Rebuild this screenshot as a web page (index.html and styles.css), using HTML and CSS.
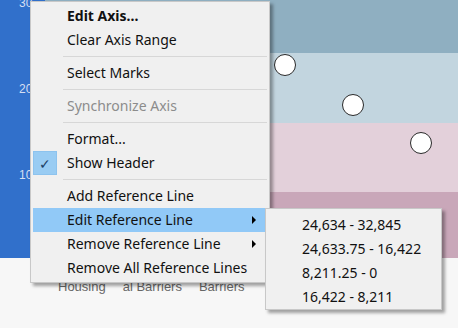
FILE: index.html
```html
<!DOCTYPE html>
<html lang="en">
<head>
  <meta charset="UTF-8" />
  <title>Axis menu</title>
  <link rel="stylesheet" href="styles.css">
</head>
<body>
<div class="view">
  <div class="chart">
    <div class="axis">
      <span class="tick">30</span>
      <span class="tick">20</span>
      <span class="tick">10</span>
    </div>
    <div class="plot">
      <div class="band band-1"></div>
      <div class="band band-2"></div>
      <div class="band band-3"></div>
      <div class="band band-4"></div>
      <div class="mark" style="left: 229px; top: 54px;"></div>
      <div class="mark" style="left: 297px; top: 94px;"></div>
      <div class="mark" style="left: 365px; top: 132px;"></div>
    </div>
  </div>
  <div class="labels">
    <span class="label">Housing</span>
    <span class="label">al Barriers</span>
    <span class="label">Barriers</span>
  </div>

  <!-- === CONTEXT MENU === -->
  <div class="menu">
    <div class="item bold">Edit Axis...</div>
    <div class="item">Clear Axis Range</div>
    <div class="sep"></div>
    <div class="item">Select Marks</div>
    <div class="sep"></div>
    <div class="item disabled">Synchronize Axis</div>
    <div class="sep"></div>
    <div class="item">Format...</div>
    <div class="item checked"><span class="check">&#10003;</span>Show Header</div>
    <div class="sep"></div>
    <div class="item">Add Reference Line</div>
    <div class="item active has-sub">Edit Reference Line</div>
    <div class="item has-sub">Remove Reference Line</div>
    <div class="item">Remove All Reference Lines</div>
  </div>

  <!-- === SUBMENU === -->
  <div class="submenu">
    <div class="sub-item">24,634 - 32,845</div>
    <div class="sub-item">24,633.75 - 16,422</div>
    <div class="sub-item">8,211.25 - 0</div>
    <div class="sub-item">16,422 - 8,211</div>
  </div>
</div>
</body>
</html>
```

FILE: styles.css
```css
* {
  box-sizing: border-box;
}

body {
  margin: 0;
  background-color: #F7F7F7;
  font-family: 'Noto Sans', sans-serif;
  width: 458px;
  height: 328px;
  overflow: hidden;
}

.view {
  position: relative;
  width: 458px;
  height: 328px;
}

/* ===== Chart ===== */
.chart {
  display: flex;
  height: 258px;
}

.axis {
  width: 45px;
  background-color: #3170CB;
  display: flex;
  flex-direction: column;
  align-items: flex-start;
  gap: 70px;
  padding: 0 0 0 19px;
  margin-top: -5px;
}

.tick {
  font-family: 'Liberation Sans', sans-serif;
  font-size: 12px;
  line-height: 16px;
  color: #D5DFF2;
}

.plot {
  flex: 1;
  position: relative;
  display: flex;
  flex-direction: column;
}

.band-1 { height: 53px; background-color: #8FAFC1; }
.band-2 { height: 70px; background-color: #C2D5DF; }
.band-3 { height: 69px; background-color: #E3D0DA; }
.band-4 { flex: 1; background-color: #C9A7B9; }

.mark {
  position: absolute;
  width: 22px;
  height: 22px;
  border-radius: 50%;
  background-color: #FFFFFF;
  border: 1px solid #2A2A2A;
}

.labels {
  display: flex;
  padding: 21px 0 0 58px;
  gap: 17px;
}

.label {
  font-family: 'Liberation Sans', sans-serif;
  font-size: 13px;
  color: #666666;
}

/* ===== Menus ===== */
.menu, .submenu {
  position: absolute;
  background-color: #F0F0F0;
  border: 1px solid #C8C8C8;
  box-shadow: 3px 3px 3px rgba(0, 0, 0, 0.35);
  padding: 2px;
  font-size: 14px;
  color: #111111;
}

.menu {
  left: 30px;
  top: 1px;
  width: 240px;
}

.item {
  position: relative;
  height: 24px;
  line-height: 24px;
  padding-left: 34px;
}

.item.bold {
  font-weight: bold;
}

.item.disabled {
  color: #8C8C8C;
}

.item.active {
  background-color: #91C9F7;
}

.item.has-sub::after {
  content: "";
  position: absolute;
  right: 11px;
  top: 8px;
  border-left: 4px solid #000000;
  border-top: 4px solid transparent;
  border-bottom: 4px solid transparent;
}

.check {
  position: absolute;
  left: 0;
  top: 0;
  width: 24px;
  height: 24px;
  background-color: #99CCF3;
  border: 1px solid #8DC3EE;
  text-align: center;
  font-size: 14px;
  color: #1C3F66;
}

.sep {
  height: 9px;
  margin-left: 30px;
  background: linear-gradient(#D7D7D7, #D7D7D7) no-repeat center / 100% 1px;
}

.submenu {
  left: 265px;
  top: 208px;
  width: 177px;
  height: 102px;
  padding: 4px 2px;
}

.sub-item {
  height: 24px;
  line-height: 24px;
  padding-left: 34px;
}
```
